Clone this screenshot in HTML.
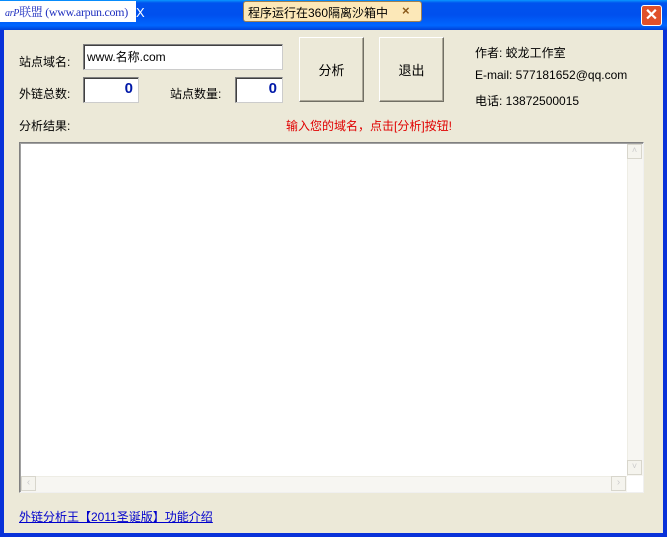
<!DOCTYPE html>
<html><head><meta charset="utf-8"><style>
*{margin:0;padding:0;box-sizing:border-box}
body{width:667px;height:537px;overflow:hidden;background:#0831d9;font-family:"Liberation Sans","Noto Sans CJK SC","WenQuanYi Zen Hei",sans-serif;font-size:12px;color:#000;position:relative}
.title{position:absolute;left:0;top:0;width:667px;height:30px;background:linear-gradient(#0997ff 0%,#0053ee 10%,#0050ee 50%,#0066ff 85%,#0041d7 100%)}
.frame{position:absolute;left:4px;top:30px;width:659px;height:503px;background:#ece9d8}
.a{position:absolute;white-space:nowrap}
.in{position:absolute;background:#fff;border:1px solid #ccc;border-top-color:#808080;border-left-color:#808080;box-shadow:inset 1px 1px 0 #404040}
.btn{position:absolute;background:#ece9d8;border:1px solid;border-color:#fff #716f64 #716f64 #fff;box-shadow:inset -1px -1px 0 #aca899;display:flex;align-items:center;justify-content:center;font-size:13px}
</style></head><body>
<div class="title"></div>
<div class="a" style="left:136px;top:5px;color:#fff;font-size:13px">X</div>
<div class="a" style="left:0;top:1px;width:136px;height:21px;background:#fff;font-family:'Liberation Serif','Noto Serif CJK SC',serif;color:#2030c0;font-size:12px;padding:2px 0 0 5px;overflow:hidden;letter-spacing:-0.3px"><i style="font-size:10px">arP</i>联盟 (www.arpun.com)</div>
<div class="a" style="left:243px;top:1px;width:179px;height:21px;background:#fce8b8;border:1px solid #a08050;border-radius:3px;font-size:12px;padding:2px 0 0 4px">程序运行在360隔离沙箱中<span style="position:absolute;left:158px;top:1px;color:#8a5a1a;font-weight:bold;font-size:13px">×</span></div>
<div class="a" style="left:641px;top:5px;width:21px;height:21px;background:#e0502a;border:1px solid #fff;border-radius:3px;color:#fff;font-weight:bold;font-size:16px;text-align:center;line-height:19px">✕</div>
<div class="frame"></div>
<div class="a" style="left:19px;top:53px">站点域名:</div>
<div class="in" style="left:83px;top:44px;width:200px;height:26px;padding:3px 3px">www.名称.com</div>
<div class="a" style="left:19px;top:85px">外链总数:</div>
<div class="in" style="left:83px;top:77px;width:56px;height:26px;text-align:right;padding:2px 5px;color:#0018a8;font-weight:bold;font-size:15px">0</div>
<div class="a" style="left:170px;top:85px">站点数量:</div>
<div class="in" style="left:235px;top:77px;width:48px;height:26px;text-align:right;padding:2px 5px;color:#0018a8;font-weight:bold;font-size:15px">0</div>
<div class="btn" style="left:299px;top:37px;width:65px;height:65px">分析</div>
<div class="btn" style="left:379px;top:37px;width:65px;height:65px">退出</div>
<div class="a" style="left:475px;top:44px">作者: 蛟龙工作室</div>
<div class="a" style="left:475px;top:68px">E-mail: 577181652@qq.com</div>
<div class="a" style="left:475px;top:92px">电话: 13872500015</div>
<div class="a" style="left:19px;top:117px">分析结果:</div>
<div class="a" style="left:286px;top:117px;color:#e00000">输入您的域名，点击[分析]按钮!</div>
<div class="in" style="left:19px;top:142px;width:625px;height:351px;border-color:#808080 #f0f0f0 #f0f0f0 #808080;box-shadow:inset 1px 1px 0 #a0a0a0"></div>
<div class="a" style="left:627px;top:144px;width:16px;height:332px;background:#f7f6f2;border-left:1px solid #eeede5"></div>
<div class="a" style="left:627px;top:144px;width:15px;height:15px;border:1px solid #d8d6cc;background:#f5f4ee;color:#ccc;font-size:9px;text-align:center">˄</div>
<div class="a" style="left:627px;top:460px;width:15px;height:15px;border:1px solid #d8d6cc;background:#f5f4ee;color:#ccc;font-size:9px;text-align:center">˅</div>
<div class="a" style="left:21px;top:476px;width:606px;height:16px;background:#f7f6f2;border-top:1px solid #eeede5"></div>
<div class="a" style="left:21px;top:476px;width:15px;height:15px;border:1px solid #d8d6cc;background:#f5f4ee;color:#ccc;font-size:10px;text-align:center">‹</div>
<div class="a" style="left:611px;top:476px;width:15px;height:15px;border:1px solid #d8d6cc;background:#f5f4ee;color:#ccc;font-size:10px;text-align:center">›</div>
<div class="a" style="left:19px;top:508px;color:#0000cc;text-decoration:underline">外链分析王【2011圣诞版】功能介绍</div>
</body></html>
